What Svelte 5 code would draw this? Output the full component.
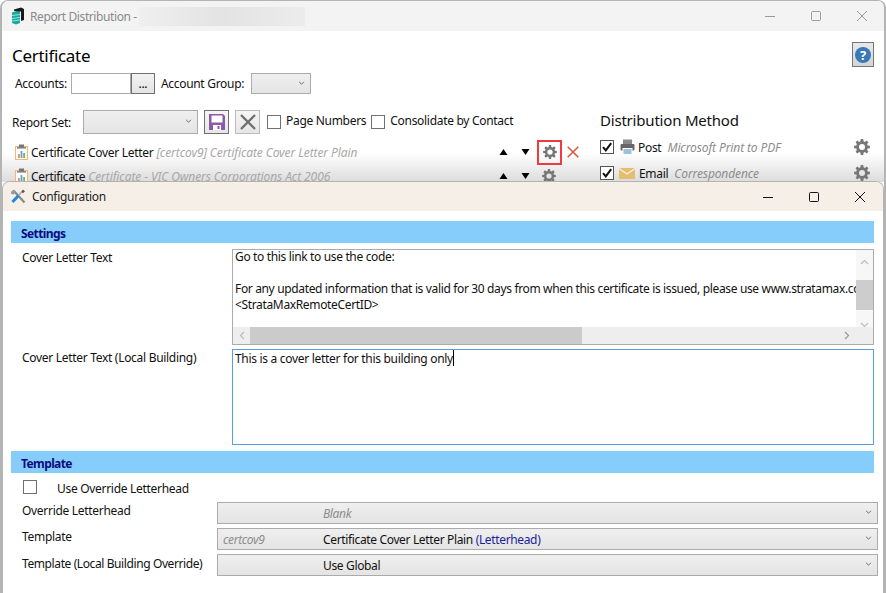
<script>
  function gearPath(cx, cy, ro, ri, n, hole) {
    let d = '';
    const step = (Math.PI * 2) / n;
    for (let i = 0; i < n; i++) {
      const a = i * step - Math.PI / 2;
      const w = step * 0.2;
      const pts = [
        [ri, a - step * 0.34],
        [ro, a - w],
        [ro, a + w],
        [ri, a + step * 0.34]
      ];
      for (const [r, t] of pts) {
        d += (d ? 'L' : 'M') + (cx + r * Math.cos(t)).toFixed(2) + ' ' + (cy + r * Math.sin(t)).toFixed(2);
      }
    }
    d += 'Z';
    d += `M${cx - hole} ${cy}a${hole} ${hole} 0 1 0 ${hole * 2} 0a${hole} ${hole} 0 1 0 ${-hole * 2} 0Z`;
    return d;
  }
  const gear = gearPath(8, 8, 8, 5.9, 8, 3);
</script>

{#snippet gearIcon(cls)}
  <svg class={cls} viewBox="0 0 16 16"><path d={gear} fill="#777" fill-rule="evenodd" /></svg>
{/snippet}

{#snippet reportIcon()}
  <svg class="report-ic" viewBox="0 0 13 16">
    <rect x="0.5" y="2.5" width="12" height="13" fill="#fff" stroke="#f0b878" />
    <rect x="2" y="3" width="9" height="1.6" fill="#888" />
    <rect x="4" y="0.5" width="5" height="3" fill="#777" />
    <rect x="3" y="10" width="1.8" height="4" fill="#e2904a" />
    <rect x="5.6" y="7" width="1.8" height="7" fill="#5aa2d8" />
    <rect x="8.2" y="9" width="1.8" height="5" fill="#6fb56f" />
  </svg>
{/snippet}

{#snippet updown()}
  <svg class="tri" viewBox="0 0 8 6"><path d="M4 0 8 6H0Z" fill="#000" /></svg>
  <svg class="tri down" viewBox="0 0 8 6"><path d="M0 0H8L4 6Z" fill="#000" /></svg>
{/snippet}

{#snippet chev()}
  <svg class="chev" viewBox="0 0 8 5"><path d="M1 1l3 3 3-3" fill="none" stroke="#666" stroke-width="1.2" /></svg>
{/snippet}

{#snippet checked()}
  <span class="cb"><svg viewBox="0 0 12 12"><path d="M2 6.2 4.8 9.4 10.2 2.2" fill="none" stroke="#111" stroke-width="2" /></svg></span>
{/snippet}

<div class="desktop">
  <section class="back">
    <header class="titlebar">
      <svg class="logo" viewBox="0 0 14 18">
        <path d="M1 5.5 9 3v13l-4 1.6L1 16Z" fill="#17a9a2" />
        <path d="M1 8.5l8-1M1 11.5l8-1M1 14l8-1" stroke="#bfeeea" stroke-width=".8" />
        <path d="M3 2.5 10 .5l3 1.5v11l-3 1V4.5L3 4Z" fill="#1a1a1a" />
      </svg>
      <span class="app-title">Report Distribution -</span>
      <span class="blurred"></span>
      <span class="spacer"></span>
      <div class="controls dim">
        <svg viewBox="0 0 12 12"><path d="M1 6.5h10" stroke="#999" /></svg>
        <svg viewBox="0 0 12 12"><rect x="1.5" y="1.5" width="9" height="9" rx="1" fill="none" stroke="#999" /></svg>
        <svg viewBox="0 0 12 12"><path d="M1 1l10 10M11 1 1 11" stroke="#999" /></svg>
      </div>
    </header>

    <div class="fade"></div>
    <div class="back-body">
      <div class="head-row">
        <h1>Certificate</h1>
        <button class="help"><span>?</span></button>
      </div>
      <div class="accounts">
        <span class="lbl">Accounts:</span>
        <span class="input"></span>
        <button class="dots">...</button>
        <span class="lbl group">Account Group:</span>
        <span class="mini-select">{@render chev()}</span>
      </div>

      <div class="columns">
        <div class="left-col">
          <div class="set-row">
            <span class="lbl set-lbl">Report Set:</span>
            <span class="mini-select set">{@render chev()}</span>
            <button class="tool save">
              <svg viewBox="0 0 18 18">
                <path d="M1 1h14l2 2v14H1Z" fill="#8a5aa8" />
                <rect x="3.5" y="2.5" width="11" height="7" fill="#fff" />
                <rect x="5" y="12" width="8" height="5" fill="#fff" />
                <rect x="9.5" y="13" width="2" height="3" fill="#8a5aa8" />
              </svg>
            </button>
            <button class="tool del">
              <svg viewBox="0 0 16 16"><path d="M1 1l14 14M15 1 1 15" stroke="#6f6f6f" stroke-width="2.4" /></svg>
            </button>
            <span class="cb empty first"></span>
            <span class="lbl">Page Numbers</span>
            <span class="cb empty second"></span>
            <span class="lbl">Consolidate by Contact</span>
          </div>
          <div class="report">
            {@render reportIcon()}
            <span class="name">Certificate Cover Letter</span>
            <em>[certcov9] Certificate Cover Letter Plain</em>
            <span class="spacer"></span>
            {@render updown()}
            <span class="gear-box">{@render gearIcon('gear')}</span>
            <svg class="red-x" viewBox="0 0 12 12"><path d="M.7.7l10.6 10.6M11.3.7.7 11.3" stroke="#d9553a" stroke-width="1.5" /></svg>
          </div>
          <div class="report second-report">
            {@render reportIcon()}
            <span class="name">Certificate</span>
            <em>Certificate - VIC Owners Corporations Act 2006</em>
            <span class="spacer"></span>
            {@render updown()}
            <span class="gear-plain">{@render gearIcon('gear')}</span>
          </div>
        </div>

        <div class="right-col">
          <h2>Distribution Method</h2>
          <div class="method">
            {@render checked()}
            <svg class="method-ic" viewBox="0 0 15 16">
              <rect x="3" y="0.5" width="9" height="5" fill="#8a8a8a" />
              <rect x="0.5" y="5" width="14" height="6.5" rx="1" fill="#666" />
              <rect x="3" y="9.5" width="9" height="6" fill="#9cc0dd" stroke="#fff" />
            </svg>
            <span class="name">Post</span>
            <em>Microsoft Print to PDF</em>
            <span class="spacer"></span>
            {@render gearIcon('gear big')}
          </div>
          <div class="method email">
            {@render checked()}
            <svg class="method-ic wide" viewBox="0 0 16 11">
              <rect width="16" height="11" fill="#e4bd72" />
              <path d="M0 .5 8 6l8-5.500" fill="none" stroke="#fbf1dc" stroke-width="1.100" />
            </svg>
            <span class="name">Email</span>
            <em>Correspondence</em>
            <span class="spacer"></span>
            {@render gearIcon('gear big')}
          </div>
        </div>
      </div>
    </div>
  </section>

  <section class="config">
    <header class="config-title">
      <svg class="tools" viewBox="0 0 16 16">
        <path d="M3.500 1.500 14.500 13.500" stroke="#8b8b8b" stroke-width="2.200" />
        <path d="M1 3l2-2.300 2 1.300v2.200L3.400 5.500 1.300 5Z" fill="#9a9a9a" />
        <path d="M13.500 1 8 7" stroke="#aaa" stroke-width="1.500" />
        <path d="M8.500 6.500 2.500 13" stroke="#1e88e0" stroke-width="3" />
        <path d="M13 .8l2 1.500-2 2-1.500-1.500Z" fill="#555" />
      </svg>
      <span>Configuration</span>
      <span class="spacer"></span>
      <div class="controls dark">
        <svg viewBox="0 0 12 12"><path d="M1 6.500h10" stroke="#111" /></svg>
        <svg viewBox="0 0 12 12"><rect x="1.500" y="1.500" width="9" height="9" rx="1" fill="none" stroke="#111" /></svg>
        <svg viewBox="0 0 12 12"><path d="M1 1l10 10M11 1 1 11" stroke="#111" /></svg>
      </div>
    </header>

    <div class="config-body">
      <div class="band">Settings</div>
      <div class="field">
        <span class="field-lbl">Cover Letter Text</span>
        <div class="textbox">
          <div class="text-view">
            <div>Go to this link to use the code:</div>
            <div>&nbsp;</div>
            <div>For any updated information that is valid for 30 days from when this certificate is issued, please use www.stratamax.co</div>
            <div>&lt;StrataMaxRemoteCertID&gt;</div>
          </div>
          <div class="vbar">
            <svg viewBox="0 0 9 6"><path d="M1 5l3.500-3.500L8 5" fill="none" stroke="#bbb" stroke-width="1.200" /></svg>
            <span class="vthumb"></span>
            <svg viewBox="0 0 9 6"><path d="M1 1l3.500 3.500L8 1" fill="none" stroke="#bbb" stroke-width="1.200" /></svg>
          </div>
          <div class="hbar">
            <svg viewBox="0 0 6 9"><path d="M5 1 1.500 4.500 5 8" fill="none" stroke="#bbb" stroke-width="1.200" /></svg>
            <span class="hthumb"></span>
            <span class="spacer"></span>
            <svg viewBox="0 0 6 9"><path d="M1 1l3.500 3.500L1 8" fill="none" stroke="#999" stroke-width="1.200" /></svg>
          </div>
          <div class="corner"></div>
        </div>
      </div>
      <div class="field local">
        <span class="field-lbl">Cover Letter Text (Local Building)</span>
        <div class="textbox focused">
          <div class="local-text">This is a cover letter for this building only<span class="caret"></span></div>
        </div>
      </div>

      <div class="band template-band">Template</div>
      <div class="override">
        <span class="cb empty override-cb"></span>
        <span>Use Override Letterhead</span>
      </div>
      <div class="sel-row">
        <span class="sel-lbl">Override Letterhead</span>
        <div class="wide-select">
          <span class="code"></span><em class="muted">Blank</em>
          <span class="spacer"></span>{@render chev()}
        </div>
      </div>
      <div class="sel-row">
        <span class="sel-lbl">Template</span>
        <div class="wide-select">
          <em class="code">certcov9</em><span>Certificate Cover Letter Plain <span class="lh">(Letterhead)</span></span>
          <span class="spacer"></span>{@render chev()}
        </div>
      </div>
      <div class="sel-row">
        <span class="sel-lbl last">Template (Local Building Override)</span>
        <div class="wide-select">
          <span class="code"></span><span>Use Global</span>
          <span class="spacer"></span>{@render chev()}
        </div>
      </div>
    </div>
  </section>
</div>

<style>
  :global(body) { margin: 0; background: #fff; }
  * { box-sizing: border-box; }
  .desktop {
    position: relative;
    width: 886px;
    height: 593px;
    overflow: hidden;
    font-family: "Noto Sans", "Open Sans", sans-serif;
    font-size: 12px;
    letter-spacing: -0.3px;
    color: #111;
    background: #fff;
  }
  button { padding: 0; font: inherit; letter-spacing: inherit; }
  .spacer { flex: 1; }
  em { font-style: italic; }

  .back {
    position: absolute;
    inset: 0;
    border: 1px solid #b4b4b4;
    border-bottom: 0;
    border-width: 1px 2px 0;
    border-radius: 8px 8px 0 0;
    overflow: hidden;
    background: #fff;
  }
  .titlebar {
    height: 30px;
    background: #f3f3f3;
    display: flex;
    align-items: center;
    padding-left: 9px;
  }
  .logo { width: 14px; height: 18px; margin-right: 5px; }
  .app-title { color: #8a8a8a; letter-spacing: -0.4px; }
  .blurred {
    width: 166px;
    height: 19px;
    margin-left: 2px;
    background: linear-gradient(90deg, #efefef, #e3e3e3 50%, #ececec);
  }
  .controls { display: flex; align-items: center; gap: 34px; padding-right: 16px; }
  .controls svg { width: 12px; height: 12px; display: block; }

  .back-body { position: relative; padding: 0 10px; }
  .head-row { display: flex; justify-content: space-between; align-items: flex-start; height: 42px; }
  h1 { margin: 12px 0 0; font-size: 17px; font-weight: 400; line-height: 25px; color: #000; }
  .help {
    width: 22px;
    height: 25px;
    margin: 11px 0 0;
    border: 1px solid #777;
    background: linear-gradient(#e8e8e8, #d4d4d4);
    display: flex;
    align-items: center;
    justify-content: center;
  }
  .help span {
    width: 16px;
    height: 16px;
    border-radius: 50%;
    background: #3a78b8;
    color: #fff;
    font-weight: 700;
    font-size: 13px;
    line-height: 16px;
    text-align: center;
  }
  .accounts { display: flex; align-items: center; height: 21px; padding-left: 3px; }
  .lbl { white-space: nowrap; }
  .input { width: 60px; height: 21px; margin-left: 4px; border: 1px solid #ababab; background: #fff; }
  .dots {
    width: 24px;
    height: 21px;
    border: 1px solid #707070;
    background: linear-gradient(#f2f2f2, #e4e4e4);
    font-size: 12px;
    line-height: 18px;
  }
  .group { margin-left: 6px; margin-right: 1px; }
  .mini-select {
    display: flex;
    align-items: center;
    justify-content: flex-end;
    width: 60px;
    height: 21px;
    margin-left: 6px;
    padding-right: 5px;
    border: 1px solid #ababab;
    background: linear-gradient(#efefef, #e4e4e4);
  }
  .chev { width: 7px; height: 4px; display: block; }
  .mini-select .chev { margin-top: -2px; }

  .columns { display: flex; margin-top: 15px; }
  .left-col { width: 588px; }
  .set-row { display: flex; align-items: center; height: 25px; }
  .set-lbl { width: 71px; padding-top: 2px; }
  .mini-select.set { width: 115px; height: 24px; margin-left: 0; }
  .tool {
    width: 25px;
    height: 24px;
    display: flex;
    align-items: center;
    justify-content: center;
    background: linear-gradient(#f5f5f5, #e6e6e6);
  }
  .tool.save { margin-left: 6px; border: 1px solid #707070; }
  .tool.save svg { width: 18px; height: 18px; }
  .tool.del { margin-left: 6px; border: 1px solid #bbb; }
  .tool.del svg { width: 16px; height: 16px; }
  .cb {
    flex: none;
    display: inline-flex;
    align-items: center;
    justify-content: center;
    width: 14px;
    height: 14px;
    border: 1px solid #555;
    background: #fff;
  }
  .cb svg { width: 12px; height: 12px; }
  .cb.empty { border-color: #707070; }
  .cb.first { margin-left: 7px; margin-right: 5px; }
  .cb.second { margin-left: 5px; margin-right: 5px; }
  .set-row .lbl:not(.set-lbl) { padding-bottom: 2px; }

  .report { display: flex; align-items: center; height: 24px; padding-left: 3px; margin-top: 6px; padding-right: 16px; }
  .second-report { margin-top: 0; }
  .report-ic { width: 13px; height: 16px; margin-right: 3px; }
  .report .name { color: #111; white-space: nowrap; padding-top: 1px; }
  .report em { color: #a8a8a8; margin-left: 3px; letter-spacing: -0.1px; white-space: nowrap; padding-top: 1px; }
  .tri { width: 9px; height: 6px; display: block; }
  .tri.down { margin-left: 13px; }
  .gear-box {
    display: flex;
    align-items: center;
    justify-content: center;
    width: 25px;
    height: 25px;
    margin-left: 7px;
    border: 2px solid #f03a3f;
  }
  .gear-plain { display: flex; align-items: center; justify-content: center; width: 25px; margin-left: 6px; margin-right: 23px; }
  .gear { width: 14px; height: 14px; display: block; }
  :global(.gear.big) { width: 16px; height: 16px; }
  .red-x { width: 12px; height: 12px; margin-left: 5px; margin-right: 5px; }

  .right-col { flex: 1; }
  h2 { margin: 0; font-size: 15px; letter-spacing: -0.2px; font-weight: 400; line-height: 23px; height: 25px; color: #111; }
  .method { display: flex; align-items: center; height: 26px; padding-right: 4px; }
  .method-ic { width: 15px; height: 16px; margin-left: 6px; margin-right: 3px; }
  .method-ic.wide { width: 16px; height: 11px; margin-right: 4px; margin-left: 5px; }
  .method .name { color: #111; }
  .method em { color: #8d8d8d; margin-left: 6px; letter-spacing: -0.12px; white-space: nowrap; }

  .fade {
    position: absolute;
    left: 0;
    right: 0;
    top: 152px;
    height: 29px;
    background: linear-gradient(#fff, #dcdcdc);
  }

  .config {
    position: absolute;
    left: 2px;
    right: 2px;
    top: 181px;
    bottom: 0;
    border: 1px solid #b4b4b4;
    border-bottom: 0;
    border-radius: 8px 8px 0 0;
    overflow: hidden;
    background: #fff;
  }
  .config-title {
    height: 29px;
    background: #f6efe8;
    display: flex;
    align-items: center;
    padding-left: 7px;
    color: #222;
  }
  .tools { width: 16px; height: 16px; margin-right: 6px; }
  .controls.dark { gap: 34px; padding-right: 17px; }

  .config-body { padding: 10px 7px 0 8px; }
  .band {
    height: 22px;
    margin-right: 2px;
    padding-left: 10px;
    background: #87cdfb;
    color: #0a0a80;
    font-weight: 700;
    letter-spacing: -0.6px;
    line-height: 25px;
  }
  .field { display: flex; margin-top: 6px; margin-right: 2px; }
  .field.local { margin-top: 4px; }
  .field-lbl { width: 221px; padding-left: 11px; padding-top: 1px; line-height: 16px; white-space: nowrap; }
  .textbox {
    position: relative;
    flex: 1;
    height: 96px;
    border: 1px solid #ababab;
    background: #fff;
    overflow: hidden;
  }
  .textbox.focused { border-color: #569de5; }
  .text-view {
    position: absolute;
    left: 2px;
    top: -1px;
    width: 621px;
    height: 78px;
    overflow: hidden;
    line-height: 16px;
    letter-spacing: -0.35px;
    white-space: nowrap;
  }
  .vbar {
    position: absolute;
    right: 0;
    top: 0;
    width: 17px;
    height: 77px;
    background: #f7f7f7;
    display: flex;
    flex-direction: column;
    align-items: center;
    padding-top: 9px;
  }
  .vbar svg { width: 9px; height: 6px; flex: none; }
  .vthumb { width: 17px; height: 30px; margin: 15px 0 12px; background: #cdcdcd; flex: none; }
  .hbar {
    position: absolute;
    left: 0;
    right: 17px;
    bottom: 0;
    height: 17px;
    background: #eee;
    display: flex;
    align-items: center;
  }
  .hbar svg { width: 6px; height: 9px; flex: none; margin: 0 6px; }
  .hbar svg:first-child { margin: 0 5px 0 6px; }
  .hthumb { width: 332px; height: 17px; background: #cbcbcb; }
  .corner { position: absolute; right: 0; bottom: 0; width: 17px; height: 17px; background: #eee; }
  .local-text { padding: 0 0 0 2px; line-height: 16px; white-space: nowrap; }
  .caret { display: inline-block; width: 1px; height: 16px; background: #000; vertical-align: -3px; }

  .template-band { margin-top: 6px; }
  .override { display: flex; align-items: flex-start; height: 29px; padding-left: 12px; }
  .override-cb { margin-top: 7px; margin-right: 20px; }
  .override span:last-child { margin-top: 8px; line-height: 16px; }
  .sel-row { display: flex; align-items: flex-start; height: 26px; }
  .sel-lbl { width: 206px; padding-left: 11px; padding-top: 1px; line-height: 16px; white-space: nowrap; }
  .sel-lbl.last { padding-top: 2px; letter-spacing: -0.4px; }
  .wide-select {
    width: 661px;
    height: 22px;
    border: 1px solid #ababab;
    background: linear-gradient(#efefef, #e4e4e4);
    display: flex;
    align-items: center;
    padding: 0 5px 0 5px;
    margin-right: -4px;
    letter-spacing: -0.35px;
  }
  .wide-select .chev { margin-top: -3px; }
  .code { width: 100px; color: #8d8d8d; flex: none; }
  .muted { color: #8d8d8d; }
  .lh { color: #1d1d9a; }
</style>
